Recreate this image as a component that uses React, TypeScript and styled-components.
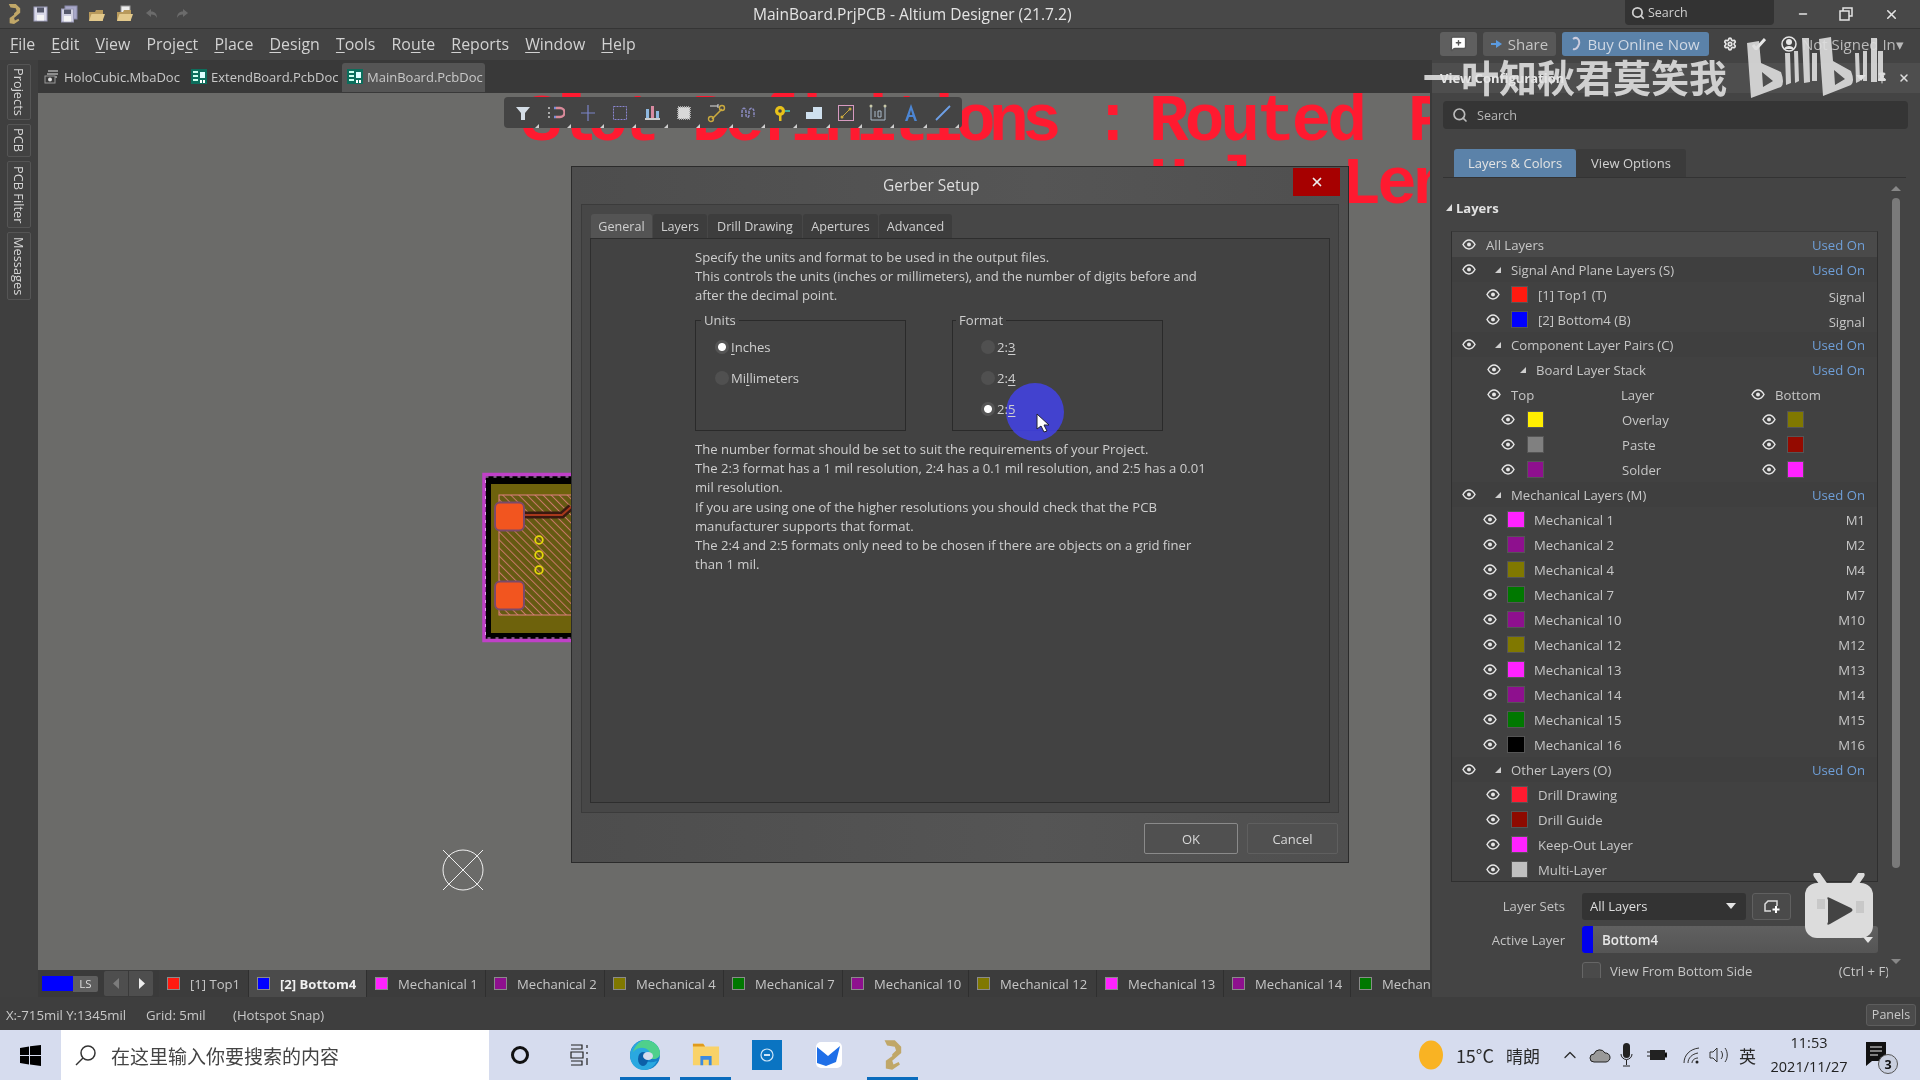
import React from "react";
import styled, { createGlobalStyle } from "styled-components";
import { Search, Settings, X, Minus, ChevronUp, Pin, MessageSquarePlus } from "lucide-react";

const Global = createGlobalStyle`
  html, body { margin: 0; padding: 0; background: #3e3e3e; overflow: hidden; }
  * { box-sizing: border-box; }
  u { text-underline-offset: 2px; text-decoration-thickness: 1px; }
`;

const Page = styled.div`
  position: relative; width: 1920px; height: 1080px; overflow: hidden;
  display: flex; flex-direction: column;
  font-family: "Open Sans", "Noto Sans CJK SC", sans-serif; font-size: 12.5px; color: #c9c9c9; background: #3e3e3e;
`;

/* ---------- title bar ---------- */
const TitleBar = styled.div`
  height: 29px; flex: none; display: flex; align-items: center; background: #484848; border-bottom: 1px solid #353535;
`;
const QuickIcons = styled.div`
  width: 753px; flex: none; display: flex; align-items: center; gap: 10px; padding-left: 7px;
`;
const QuickIcon = styled.svg` width: 18px; height: 18px; flex: none; `;
const AppTitle = styled.div` font-size: 15.55px; color: #e4e4e4; white-space: nowrap; `;
const TopRight = styled.div` margin-left: auto; width: 295px; height: 100%; display: flex; align-items: flex-start; `;
const TopSearch = styled.div`
  width: 149px; height: 25px; background: #333; border-radius: 0 0 4px 4px; display: flex; align-items: center;
  gap: 3px; padding-left: 6px; font-size: 12.5px; color: #cfcfcf;
`;
const WinButtons = styled.div`
  flex: 1; height: 100%; display: flex; align-items: center; justify-content: space-around; padding: 0 6px 0 8px; color: #e4e4e4;
`;

/* ---------- menu bar ---------- */
const MenuBar = styled.div`
  height: 31px; flex: none; display: flex; align-items: center; background: #434343; padding: 0 0 2px 10px; gap: 16.1px;
`;
const MenuItem = styled.div` font-size: 15.9px; color: #d2d2d2; white-space: nowrap; `;
const MenuRight = styled.div`
  margin-left: auto; width: 480px; padding-right: 6px; display: flex; align-items: center; height: 100%; font-size: 15px;
`;
const PillButton = styled.div<{ $bg: string; $w: number; $ml: number; $color?: string }>`
  width: ${p => p.$w}px; margin-left: ${p => p.$ml}px; height: 24px; border-radius: 3px; background: ${p => p.$bg};
  color: ${p => p.$color ?? "#c5c5c5"}; display: flex; align-items: center; justify-content: center; gap: 6px; flex: none; white-space: nowrap;
`;
const MenuGlyph = styled.div<{ $ml: number }>`
  margin-left: ${p => p.$ml}px; display: flex; align-items: center; flex: none; color: #e6e6e6;
`;
const SignedIn = styled.div` margin-left: 5px; color: #b9b9b9; white-space: nowrap; font-size: 15px; `;

/* ---------- workspace ---------- */
const Workspace = styled.div` height: 937px; flex: none; display: flex; `;
const SideStrip = styled.div`
  width: 38px; flex: none; background: #3f3f3f; padding: 4px 0 0 7px; display: flex; flex-direction: column; gap: 4px;
`;
const SideTab = styled.div<{ $h: number }>`
  width: 24px; height: ${p => p.$h}px; background: #424242; border: 1px solid #555; border-radius: 2px;
  writing-mode: vertical-rl; display: flex; align-items: center; justify-content: center; font-size: 12.8px; color: #d6d6d6; white-space: nowrap;
`;
const CenterCol = styled.div` width: 1392px; flex: none; display: flex; flex-direction: column; `;
const DocTabs = styled.div`
  height: 33px; flex: none; background: #393939; display: flex; align-items: flex-end; padding: 0 0 1px 6px;
`;
const DocTab = styled.div<{ $active?: boolean; $w: number }>`
  width: ${p => p.$w}px; height: 29px; display: flex; align-items: center; gap: 4px; white-space: nowrap; padding: 0 0 2px ${p => p.$active ? 5 : 0}px;
  font-size: 13px; color: #c9c9c9; background: ${p => p.$active ? "#555" : "transparent"};
  border-radius: 3px 3px 0 0;
`;
const Canvas = styled.div`
  position: relative; flex: 1; background: #6b6b69; overflow: hidden;
`;
const RedLine = styled.div<{ $left: number; $top: number; $ws: number; $ls: number }>`
  position: absolute; left: ${p => p.$left}px; top: ${p => p.$top}px; word-spacing: ${p => p.$ws}px; letter-spacing: ${p => p.$ls}px;
  font-family: "Liberation Mono", monospace; font-weight: 700; font-size: 66px; line-height: 66px; color: #ff1a30; white-space: pre;
`;
const FloatBar = styled.div`
  position: absolute; left: 466px; top: 4px; width: 458px; height: 31px; background: #444; border-radius: 4px;
  display: flex; align-items: center; padding-left: 9px; gap: 12.300px;
`;
const ToolSlot = styled.div`
  position: relative; width: 20px; height: 20px; flex: none;
  &::after { content: ""; position: absolute; right: -6px; bottom: -5px; border-left: 4px solid transparent; border-bottom: 4px solid #cfcfcf; }
`;
const BoardArt = styled.svg` position: absolute; left: 440px; top: 378px; `;
const Origin = styled.svg` position: absolute; left: 403px; top: 755px; `;

/* ---------- dialog ---------- */
const Dialog = styled.div`
  position: absolute; left: 533px; top: 73px; width: 778px; height: 697px; background: linear-gradient(90deg, #4d4d4d, #555 60%, #4f4f4f);
  border: 1px solid #2b2b2b; display: flex; flex-direction: column;
`;
const DialogHead = styled.div` height: 37px; flex: none; display: flex; align-items: center; padding: 0 0 2px 311px; `;
const DialogTitle = styled.div` font-size: 15.5px; color: #dedede; `;
const CloseBtn = styled.div`
  margin-left: auto; margin-right: 8px; margin-top: -6px; width: 47px; height: 28px; background: #a60000; color: #eee;
  display: flex; align-items: center; justify-content: center;
`;
const DialogBody = styled.div`
  margin: 0 9px; height: 609px; flex: none; background: #474747; border: 1px solid #3b3b3b; padding: 9px 8px 9px; display: flex; flex-direction: column;
`;
const TabRow = styled.div` height: 24px; flex: none; display: flex; gap: 1px; padding-left: 1px; `;
const DlgTab = styled.div<{ $w: number; $active?: boolean }>`
  width: ${p => p.$w}px; display: flex; align-items: center; justify-content: center; font-size: 12.6px;
  background: ${p => p.$active ? "#545454" : "#3d3d3d"}; color: #d0d0d0; border-radius: 3px 3px 0 0; white-space: nowrap;
`;
const Pane = styled.div`
  flex: 1; background: #424242; border: 1px solid #2e2e2e; padding: 9px 0 0 104px; font-size: 13.1px; line-height: 19px; color: #cfcfcf;
`;
const TextBlock = styled.div` width: 580px; white-space: pre-line; `;
const GroupRow = styled.div` display: flex; gap: 46px; margin-top: 6px; `;
const Group = styled.fieldset`
  width: 211px; height: 120px; margin: 0; padding: 0; border: 1px solid #2a2a2a; min-width: 0;
`;
const Legend = styled.legend<{ $ml: number }>` margin-left: ${p => p.$ml}px; padding: 0 3px; line-height: 18px; font-size: 13.1px; color: #cfcfcf; `;
const RadioList = styled.div<{ $pl: number }>` padding: 3px 0 0 ${p => p.$pl}px; `;
const RadioRow = styled.div` height: 31px; display: flex; align-items: center; gap: 2px; color: #cfcfcf; `;
const Radio = styled.div<{ $on?: boolean }>`
  width: 14px; height: 14px; border-radius: 50%; flex: none; margin-top: -2px;
  background: ${p => p.$on ? "radial-gradient(circle, #fff 0 3.5px, #555 4.5px)" : "#505050"};
`;
const Para = styled(TextBlock)` margin-top: 9px; line-height: 19.200px; `;
const DialogFoot = styled.div` flex: 1; display: flex; justify-content: flex-end; gap: 9px; padding: 10px 10px 0 0; `;
const DlgBtn = styled.div<{ $w: number; $primary?: boolean }>`
  width: ${p => p.$w}px; height: 31px; display: flex; align-items: center; justify-content: center; font-size: 13px; color: #d8d8d8;
  background: #505050; border: 1px solid ${p => p.$primary ? "#8a8a8a" : "#5f5f5f"}; border-radius: 2px;
`;
const Highlight = styled.div`
  position: absolute; left: 434px; top: 216px; width: 58px; height: 58px; border-radius: 50%; background: #3d3dcf; mix-blend-mode: lighten;
`;
const Pointer = styled.svg` position: absolute; left: 464px; top: 246px; `;

/* ---------- layer tab strip ---------- */
const LayerBar = styled.div` height: 27px; flex: none; background: #3a3a3a; display: flex; align-items: center; padding-left: 4px; overflow: hidden; `;
const ActiveChip = styled.div` width: 31px; height: 15px; background: #0000ff; flex: none; `;
const LsChip = styled.div` width: 25px; height: 16px; background: #5f5f5f; border-radius: 0 2px 2px 0; font-size: 11.5px; color: #ddd; display: flex; align-items: center; justify-content: center; flex: none; `;
const NavBox = styled.div` margin-left: 6px; width: 49px; height: 25px; background: #4e4e4e; border-radius: 2px; display: flex; flex: none; margin-right: 6px; `;
const NavBtn = styled.div<{ $dim?: boolean }>`
  flex: 1; display: flex; align-items: center; justify-content: center; color: ${p => p.$dim ? "#7c7c7c" : "#eee"};
  &:first-child { border-right: 1px solid #3a3a3a; }
`;
const LayerTab = styled.div<{ $w: number; $active?: boolean }>`
  width: ${p => p.$w}px; flex: none; height: 27px; display: flex; align-items: center; gap: 10px; padding-left: 8px; white-space: nowrap;
  background: ${p => p.$active ? "#4b4b4b" : "#3c3c3c"}; font-size: 13.1px; font-weight: ${p => p.$active ? 700 : 400}; color: ${p => p.$active ? "#efefef" : "#c6c6c6"};
  border-right: 1px solid #2f2f2f; overflow: hidden;
`;
const TabSwatch = styled.div<{ $c: string }>` width: 13px; height: 13px; flex: none; background: ${p => p.$c}; border: 1px solid #8a8a8a; `;

/* ---------- right panel ---------- */
const RightPanel = styled.div` width: 490px; flex: none; background: #444; display: flex; flex-direction: column; border-left: 2px solid #3a3a3a; padding-top: 3px; `;
const PanelHead = styled.div`
  height: 30px; flex: none; margin: 0; background: #4e4e4e; display: flex; align-items: center; padding: 0 10px 0 8px;
  font-weight: 700; font-size: 13px; color: #e8e8e8;
`;
const PanelHeadIcons = styled.div` margin-left: auto; display: flex; align-items: center; gap: 10px; color: #ddd; `;
const PanelSearch = styled.div`
  margin: 8px 12px 0 11px; height: 28px; flex: none; background: #353535; border-radius: 4px; display: flex; align-items: center; gap: 9px; padding-left: 9px;
  color: #b8b8b8; font-size: 12.6px;
`;
const PanelTabs = styled.div` margin: 20px 14px 0 11px; height: 29px; flex: none; display: flex; padding-left: 11px; border-bottom: 1px solid #333; `;
const PanelTab = styled.div<{ $w: number; $active?: boolean }>`
  width: ${p => p.$w}px; display: flex; align-items: center; justify-content: center; border-radius: 3px 3px 0 0; font-size: 13px;
  background: ${p => p.$active ? "#5b82a9" : "#3b3b3b"}; color: ${p => p.$active ? "#e4e4e4" : "#d2d2d2"};
`;
const PanelBody = styled.div` flex: 1; display: flex; min-height: 0; `;
const PanelMain = styled.div` width: 456px; flex: none; padding-left: 19px; display: flex; flex-direction: column; `;
const SectionHead = styled.div`
  height: 53px; flex: none; display: flex; align-items: center; gap: 4px; font-weight: 700; font-size: 13px; color: #e2e2e2; margin-left: -5px; padding-top: 6px;
`;
const LayerList = styled.div` width: 427px; height: 651px; flex: none; background: #414141; border: 1px solid #2f2f2f; border-top-color: #3a3a3a; `;
const LayerRow = styled.div<{ $indent: number; $tone?: string }>`
  height: 25px; display: flex; align-items: center; padding: 0 12px 0 ${p => p.$indent}px; background: ${p => p.$tone ?? "transparent"}; color: #c6c6c6; font-size: 13.15px; white-space: nowrap;
`;
const Caret = styled.div`
  width: 0; height: 0; margin: 0 10px 0 19px; flex: none; border-left: 6px solid transparent; border-bottom: 6px solid #cfcfcf;
`;
const Swatch = styled.div<{ $c: string; $ml: number; $mr: number; $w: number }>`
  width: ${p => p.$w}px; height: 17px; flex: none; margin: 0 ${p => p.$mr}px 0 ${p => p.$ml}px; background: ${p => p.$c}; border: 1px solid #555;
`;
const LeadText = styled.div<{ $ml?: number; $w?: number }>`
  margin-left: ${p => p.$ml ?? 0}px; ${p => p.$w ? `width: ${p.$w}px; flex: none;` : ""}
`;
const EndText = styled.div<{ $link?: boolean; $low?: boolean }>`
  margin-left: auto; margin-top: ${p => p.$low ? 4 : 0}px; color: ${p => p.$link ? "#6f9fd8" : "#c6c6c6"};
`;
const Controls = styled.div` display: flex; flex-direction: column; flex: none; overflow: hidden; height: 96px; `;
const ControlRow = styled.div<{ $h: number; $mt: number }>` height: ${p => p.$h}px; margin-top: ${p => p.$mt}px; flex: none; display: flex; align-items: center; `;
const ControlLabel = styled.div` width: 115px; padding-right: 1px; text-align: right; flex: none; font-size: 13.1px; color: #c4c4c4; `;
const SelectBox = styled.div`
  margin-left: 16px; width: 164px; height: 27px; background: #333; border-radius: 3px; color: #dedede; font-size: 13px; display: flex; align-items: center; justify-content: space-between; padding: 0 10px 0 8px;
`;
const DownTri = styled.div` width: 0; height: 0; border-left: 5px solid transparent; border-right: 5px solid transparent; border-top: 6px solid #e4e4e4; flex: none; `;
const SquareBtn = styled.div` margin-left: 6px; width: 39px; height: 27px; background: #4a4a4a; border: 1px solid #606060; border-radius: 3px; display: flex; align-items: center; justify-content: center; color: #ddd; `;
const ActiveBox = styled.div`
  margin-left: 16px; width: 296px; height: 27px; background: linear-gradient(#606060, #555); border-radius: 3px; display: flex; align-items: center; font-weight: 600; font-size: 13.4px; color: #e6e6e6; overflow: hidden; padding-right: 5px; justify-content: space-between;
`;
const ActiveLabel = styled.div` display: flex; align-items: center; height: 100%; `;
const ActiveBlue = styled.div` width: 11px; height: 100%; background: #0000ee; margin-right: 9px; flex: none; `;
const CheckBox = styled.div` margin-left: 16px; width: 19px; height: 24px; margin-top: 6px; background: #4a4a4a; border: 1px solid #666; border-radius: 3px; flex: none; `;
const CheckText = styled.div` margin-left: 9px; font-size: 13.1px; color: #c6c6c6; white-space: nowrap; `;
const Shortcut = styled.div` margin-left: auto; margin-right: -1px; font-size: 13.1px; color: #c6c6c6; white-space: nowrap; `;
const ScrollCol = styled.div`
  width: 16px; flex: none; display: flex; flex-direction: column; align-items: center; padding-top: 8px;
`;
const UpTri = styled.div` width: 0; height: 0; border-left: 5px solid transparent; border-right: 5px solid transparent; border-bottom: 5px solid #888; `;
const DownTriDim = styled.div` width: 0; height: 0; border-left: 5px solid transparent; border-right: 5px solid transparent; border-top: 5px solid #888; margin-top: 91px; `;
const Thumb = styled.div` margin-top: 7px; width: 8px; height: 670px; background: #7a7a7a; border-radius: 4px; flex: none; `;

/* ---------- status + taskbar ---------- */
const StatusBar = styled.div`
  height: 33px; flex: none; background: #3e3e3e; display: flex; align-items: center; padding: 2px 0 0 6px; font-size: 13.2px; color: #c8c8c8; white-space: nowrap;
`;
const StatusItem = styled.div<{ $w: number }>` width: ${p => p.$w}px; flex: none; `;
const PanelsBtn = styled.div`
  margin-left: auto; margin-right: 4px; width: 50px; height: 22px; background: #4b4b4b; border: 1px solid #5d5d5d; border-radius: 3px; display: flex; align-items: center; justify-content: center; font-size: 12.5px;
`;
const Taskbar = styled.div`
  height: 50px; flex: none; background: #d6dcee; display: flex; align-items: center; color: #222;
`;
const WinSlot = styled.div` width: 61px; flex: none; display: flex; justify-content: center; padding-right: 1px; `;
const TaskSearch = styled.div`
  width: 428px; height: 50px; flex: none; background: #fff; display: flex; align-items: center; gap: 14px; padding-left: 14px;
  font-size: 19px; color: #444; font-family: "Noto Sans CJK SC", sans-serif;
`;
const TaskIcon = styled.div<{ $w: number; $ml?: number; $active?: boolean }>`
  position: relative; width: ${p => p.$w}px; margin-left: ${p => p.$ml ?? 0}px; height: 50px; flex: none; display: flex; align-items: center; justify-content: center;
  ${p => p.$active ? `&::after { content: ""; position: absolute; left: 0; right: 0; bottom: 0; height: 3px; background: #0a6cbd; }` : ""}
`;
const Tray = styled.div` margin-left: auto; display: flex; align-items: center; height: 100%; padding-right: 24px; `;
const TrayItem = styled.div<{ $ml: number; $size?: number }>`
  margin-left: ${p => p.$ml}px; display: flex; align-items: center; flex: none; font-size: ${p => p.$size ?? 14}px; color: #2a2a2a; white-space: nowrap;
  font-family: "Noto Sans CJK SC", "Open Sans", sans-serif;
`;
const Clock = styled.div`
  margin-left: 8px; width: 90px; text-align: center; font-size: 14.5px; line-height: 24px; color: #222;
`;
const Notify = styled.div` position: relative; margin-left: 12px; width: 30px; height: 34px; flex: none; `;
const NotifyBubble = styled.svg` position: absolute; left: 0; top: 4px; `;
const NotifyBadge = styled.div`
  position: absolute; right: -2px; bottom: -2px; width: 20px; height: 20px; border-radius: 50%; border: 1px solid #555; background: #c9cfdf;
  display: flex; align-items: center; justify-content: center; font-size: 12.5px; font-weight: 700; color: #111;
`;

/* ---------- watermark ---------- */
const Watermark = styled.div`
  position: absolute; left: 1423px; top: 52px; font-family: "Noto Sans CJK SC", sans-serif; font-weight: 700; font-size: 38px; line-height: 48px; color: rgba(226,226,226,.88); white-space: nowrap;
`;
const BiliLogo = styled.svg` position: absolute; left: 1747px; top: 35px; `;
const TvLogo = styled.svg` position: absolute; left: 1804px; top: 873px; `;

/* ---------- icons ---------- */
const Eye = () => (
  <svg width="14" height="11" viewBox="0 0 14 11" style={{ flex: "none" }}>
    <path d="M1 5.5C3 2 5 1 7 1s4 1 6 4.5C11 9 9 10 7 10S3 9 1 5.5Z" fill="none" stroke="#e6e6e6" strokeWidth="1.5" />
    <circle cx="7" cy="5.5" r="2" fill="#e6e6e6" />
  </svg>
);
const AltiumMark = ({ h }: { h: number }) => (
  <svg width={h * 0.68} height={h} viewBox="0 0 17 25">
    <path d="M2 1 10 1 15 6 15 11 8 17 8 12 11 9 10 6 4 5ZM3 23 3 17 10 12 8 17 9 20 13 18 14 20 8 24Z" fill="#c0a768" />
  </svg>
);
const FloppyIcon = () => (
  <QuickIcon viewBox="0 0 18 18">
    <rect x="2" y="2" width="13" height="14" fill="#d8d8e8" stroke="#9a9ab8" />
    <rect x="5" y="2.5" width="7" height="5" fill="#55586a" />
    <rect x="5" y="10" width="7" height="5.5" fill="#f4f4f4" />
  </QuickIcon>
);
const FloppyAll = () => (
  <QuickIcon viewBox="0 0 18 18">
    <rect x="5" y="1" width="12" height="13" fill="#a8a8c8" stroke="#8888a8" />
    <rect x="1.5" y="4" width="12" height="13" fill="#d0d0e0" stroke="#9a9ab8" />
    <rect x="4" y="4.5" width="7" height="4.5" fill="#55586a" />
    <rect x="4" y="11" width="7" height="5.5" fill="#f4f4f4" />
  </QuickIcon>
);
const FolderIcon = ({ doc }: { doc?: boolean }) => (
  <QuickIcon viewBox="0 0 18 18">
    {doc && <rect x="5" y="1" width="9" height="10" fill="#eee" stroke="#999" />}
    <path d="M1 7h6l1-2h7v11H1Z" fill="#b89a5c" />
    <path d="M1 16 3.5 9H17l-2.5 7Z" fill="#e2c98c" />
  </QuickIcon>
);
const UndoIcon = ({ flip }: { flip?: boolean }) => (
  <QuickIcon viewBox="0 0 18 18" style={flip ? { transform: "scaleX(-1)" } : undefined}>
    <path d="M7 4 2 8l5 4V9.5c3 0 5 1 6 3.5 0-4-2-6.500-6-6.500Z" fill="#6b6b6b" />
  </QuickIcon>
);
const PcbDocIcon = () => (
  <svg width="16" height="15" viewBox="0 0 16 15" style={{ flex: "none" }}>
    <rect width="16" height="15" fill="#0c6e5c" />
    <rect x="2" y="2" width="5" height="2" fill="#cfe" /><rect x="2" y="6" width="5" height="2" fill="#cfe" />
    <rect x="2" y="10" width="5" height="2" fill="#cfe" /><rect x="9" y="3" width="5" height="6" fill="#dff" />
    <rect x="9" y="11" width="2" height="3" fill="#fff" /><rect x="12" y="11" width="2" height="3" fill="#fff" />
  </svg>
);
const MbaIcon = () => (
  <svg width="16" height="16" viewBox="0 0 16 16" style={{ flex: "none" }}>
    <path d="M4 2h10M3 5h11M2 8h11" stroke="#aaa" strokeWidth="1.4" />
    <rect x="1" y="7" width="10" height="7" fill="#3a3a3a" stroke="#999" />
    <circle cx="6" cy="10.500" r="2" fill="#ddd" />
  </svg>
);

const tools: React.ReactNode[] = [
  <path key="0" d="M3 4h14l-5 6v7h-4v-7Z" fill="#d4dde6" />,
  <g key="1"><path d="M11 5h4a4 4 0 0 1 0 9h-4" fill="none" stroke="#d98a9a" strokeWidth="2.4" /><path d="M11 5H8M11 14H8" stroke="#7c8fd8" strokeWidth="2.4" strokeDasharray="2 1" /><circle cx="4" cy="5" r="1" fill="#ccc" /><circle cx="4" cy="10" r="1" fill="#ccc" /><circle cx="4" cy="14" r="1" fill="#ccc" /></g>,
  <path key="2" d="M10 2v16M3 10h14" stroke="#7b84c8" strokeWidth="1.200" />,
  <rect key="3" x="3.500" y="3.500" width="13" height="13" fill="none" stroke="#8a86d0" strokeDasharray="2 1" />,
  <g key="4"><rect x="4" y="6" width="3" height="9" fill="#8fb8e0" /><rect x="9" y="3" width="3" height="12" fill="#d88aa0" /><rect x="14" y="8" width="3" height="7" fill="#8fb8e0" /><rect x="3" y="15" width="15" height="2" fill="#ccc" /></g>,
  <g key="5"><rect x="4" y="4" width="12" height="12" fill="#d8d8d8" stroke="#aaa" strokeDasharray="1 1" strokeWidth="2" /></g>,
  <g key="6"><path d="M5 16 15 6" stroke="#c9a93f" strokeWidth="1.600" /><circle cx="15" cy="5" r="2.500" fill="none" stroke="#c9a93f" strokeWidth="1.400" /><circle cx="4" cy="16" r="2.500" fill="none" stroke="#c9a93f" strokeWidth="1.400" /><path d="M3 3h8M11 1v4" stroke="#ddd" /></g>,
  <path key="7" d="M3 14V9c0-5 4-5 4 0v3c0 3 3 3 3 0V9c0-5 5-5 5 0v5" fill="none" stroke="#8a8ac0" strokeWidth="1.500" strokeDasharray="3 1" />,
  <g key="8"><circle cx="9" cy="8" r="5" fill="#e8c21a" /><circle cx="9" cy="8" r="1.800" fill="#444" /><rect x="8" y="12" width="2.500" height="6" fill="#e8c21a" /><path d="M14 8h5" stroke="#4a9" strokeWidth="2" /></g>,
  <path key="9" d="M2 16V9h7V4h9v12Z" fill="#cfe0ee" />,
  <g key="10"><rect x="2.500" y="2.500" width="15" height="15" fill="none" stroke="#d79ac0" /><path d="M6 14 14 6" stroke="#c9a93f" /><circle cx="14" cy="6" r="1.500" fill="#c9a93f" /><circle cx="6" cy="14" r="1.500" fill="#c9a93f" /></g>,
  <g key="11"><path d="M3 3v14h14V3" fill="none" stroke="#a9b9c9" /><circle cx="3" cy="3" r="1.500" fill="#c9c9a9" /><circle cx="17" cy="3" r="1.500" fill="#c9c9a9" /><path d="M7 8v6M10 8v6h3V8h-3" fill="none" stroke="#a9b9c9" /></g>,
  <path key="12" d="M10 1 16 18h-2.500L12 14H8l-1.500 4H4Zm0 6L8.600 12h2.800Z" fill="#4c86d4" />,
  <path key="13" d="M3 17 17 3" stroke="#6ea0e8" strokeWidth="1.800" />,
];

type Row =
  | { k: "all" | "head"; label: string; indent?: number }
  | { k: "sub"; label: string }
  | { k: "cols" }
  | { k: "pair"; label: string; a: string; b: string }
  | { k: "item"; label: string; c: string; end?: string }
  | { k: "mech"; label: string; c: string; end: string };

const M = "#ff22ff", P = "#8e108e", O = "#807800", G = "#007800";
const rows: Row[] = [
  { k: "all", label: "All Layers" },
  { k: "head", label: "Signal And Plane Layers (S)" },
  { k: "item", label: "[1] Top1 (T)", c: "#ff1a10", end: "Signal" },
  { k: "item", label: "[2] Bottom4 (B)", c: "#0000ff", end: "Signal" },
  { k: "head", label: "Component Layer Pairs (C)" },
  { k: "sub", label: "Board Layer Stack" },
  { k: "cols" },
  { k: "pair", label: "Overlay", a: "#ffee00", b: "#807800" },
  { k: "pair", label: "Paste", a: "#808080", b: "#940a00" },
  { k: "pair", label: "Solder", a: P, b: M },
  { k: "head", label: "Mechanical Layers (M)" },
  { k: "mech", label: "Mechanical 1", c: M, end: "M1" },
  { k: "mech", label: "Mechanical 2", c: P, end: "M2" },
  { k: "mech", label: "Mechanical 4", c: O, end: "M4" },
  { k: "mech", label: "Mechanical 7", c: G, end: "M7" },
  { k: "mech", label: "Mechanical 10", c: P, end: "M10" },
  { k: "mech", label: "Mechanical 12", c: O, end: "M12" },
  { k: "mech", label: "Mechanical 13", c: M, end: "M13" },
  { k: "mech", label: "Mechanical 14", c: P, end: "M14" },
  { k: "mech", label: "Mechanical 15", c: G, end: "M15" },
  { k: "mech", label: "Mechanical 16", c: "#000", end: "M16" },
  { k: "head", label: "Other Layers (O)" },
  { k: "item", label: "Drill Drawing", c: "#ff1a30" },
  { k: "item", label: "Drill Guide", c: "#8e0a00" },
  { k: "item", label: "Keep-Out Layer", c: M },
  { k: "item", label: "Multi-Layer", c: "#c0c0c0" },
];

const renderRow = (r: Row, i: number) => {
  switch (r.k) {
    case "all":
      return <LayerRow key={i} $indent={10} $tone="#4a4a4a"><Eye /><LeadText $ml={10}>{r.label}</LeadText><EndText $link>Used On</EndText></LayerRow>;
    case "head":
      return <LayerRow key={i} $indent={10} $tone="#3f3f3f"><Eye /><Caret />{r.label}<EndText $link>Used On</EndText></LayerRow>;
    case "sub":
      return <LayerRow key={i} $indent={35}><Eye /><Caret />{r.label}<EndText $link>Used On</EndText></LayerRow>;
    case "cols":
      return <LayerRow key={i} $indent={35}><Eye /><LeadText $ml={10} $w={110}>Top</LeadText><LeadText $w={130}>Layer</LeadText><Eye /><LeadText $ml={10}>Bottom</LeadText></LayerRow>;
    case "pair":
      return <LayerRow key={i} $indent={49}><Eye /><Swatch $c={r.a} $ml={12} $mr={78} $w={17} /><LeadText $w={140}>{r.label}</LeadText><Eye /><Swatch $c={r.b} $ml={11} $mr={0} $w={17} /></LayerRow>;
    case "item":
      return <LayerRow key={i} $indent={34}><Eye /><Swatch $c={r.c} $ml={11} $mr={10} $w={17} />{r.label}{r.end && <EndText $low>{r.end}</EndText>}</LayerRow>;
    case "mech":
      return <LayerRow key={i} $indent={31}><Eye /><Swatch $c={r.c} $ml={10} $mr={9} $w={18} />{r.label}<EndText>{r.end}</EndText></LayerRow>;
  }
};

const layerTabs = [
  { l: "[1] Top1", c: "#ff1a10", w: 90 },
  { l: "[2] Bottom4", c: "#0000ff", w: 118, active: true },
  { l: "Mechanical 1", c: M, w: 119 },
  { l: "Mechanical 2", c: P, w: 119 },
  { l: "Mechanical 4", c: O, w: 119 },
  { l: "Mechanical 7", c: G, w: 119 },
  { l: "Mechanical 10", c: P, w: 126 },
  { l: "Mechanical 12", c: O, w: 128 },
  { l: "Mechanical 13", c: M, w: 127 },
  { l: "Mechanical 14", c: P, w: 127 },
  { l: "Mechanical 15", c: G, w: 127 },
];

const App: React.FC = () => (
  <Page>
    <Global />
    <TitleBar>
      <QuickIcons>
        <AltiumMark h={22} />
        <FloppyIcon /><FloppyAll /><FolderIcon /><FolderIcon doc /><UndoIcon /><UndoIcon flip />
      </QuickIcons>
      <AppTitle>MainBoard.PrjPCB - Altium Designer (21.7.2)</AppTitle>
      <TopRight>
        <TopSearch><Search size={14} strokeWidth={3} />Search</TopSearch>
        <WinButtons><Minus size={12} strokeWidth={3} /><svg width="14" height="14" viewBox="0 0 14 14"><path d="M4 4V1h9v8h-3M1 4h9v9H1Z" fill="none" stroke="#e4e4e4" strokeWidth="1.500" /></svg><X size={15} strokeWidth={2.500} /></WinButtons>
      </TopRight>
    </TitleBar>

    <MenuBar>
      <MenuItem><u>F</u>ile</MenuItem><MenuItem><u>E</u>dit</MenuItem><MenuItem><u>V</u>iew</MenuItem>
      <MenuItem>Proje<u>c</u>t</MenuItem><MenuItem><u>P</u>lace</MenuItem><MenuItem><u>D</u>esign</MenuItem>
      <MenuItem><u>T</u>ools</MenuItem><MenuItem>Ro<u>u</u>te</MenuItem><MenuItem><u>R</u>eports</MenuItem>
      <MenuItem><u>W</u>indow</MenuItem><MenuItem><u>H</u>elp</MenuItem>
      <MenuRight>
        <PillButton $bg="#5f5f5f" $w={37} $ml={0} $color="#fff"><MessageSquarePlus size={17} fill="#fff" stroke="#555" /></PillButton>
        <PillButton $bg="#585858" $w={73} $ml={6}><svg width="11" height="10" viewBox="0 0 11 10"><path d="M0 6V4h5V1l6 4-6 4V6Z" fill="#5b9be0" /></svg>Share</PillButton>
        <PillButton $bg="#5b82a9" $w={147} $ml={6} $color="#cfd8e4"><svg width="10" height="16" viewBox="0 0 10 16"><path d="M2 3c4-3 7 1 6 5-1 3-3 6-6 5" fill="none" stroke="#ccd" strokeWidth="2" /></svg>Buy Online Now</PillButton>
        <MenuGlyph $ml={14}><Settings size={14} strokeWidth={3} /></MenuGlyph>
        <MenuGlyph $ml={15}><svg width="14" height="12" viewBox="0 0 14 12"><path d="M1 7 4 11 13 1" fill="none" stroke="#e6e6e6" strokeWidth="3" /></svg></MenuGlyph>
        <MenuGlyph $ml={15}><svg width="16" height="16" viewBox="0 0 16 16"><circle cx="8" cy="8" r="7" fill="none" stroke="#e6e6e6" strokeWidth="1.500" /><circle cx="8" cy="6" r="3" fill="#e6e6e6" /><path d="M3 13c1-4 9-4 10 0" fill="#e6e6e6" /></svg></MenuGlyph>
        <SignedIn>Not Signed In▾</SignedIn>
      </MenuRight>
    </MenuBar>

    <Workspace>
      <SideStrip>
        <SideTab $h={56}>Projects</SideTab>
        <SideTab $h={33}>PCB</SideTab>
        <SideTab $h={67}>PCB Filter</SideTab>
        <SideTab $h={68}>Messages</SideTab>
      </SideStrip>

      <CenterCol>
        <DocTabs>
          <DocTab $w={147}><MbaIcon />HoloCubic.MbaDoc</DocTab>
          <DocTab $w={151}><PcbDocIcon />ExtendBoard.PcbDoc</DocTab>
          <DocTab $w={143} $active><PcbDocIcon />MainBoard.PcbDoc</DocTab>
        </DocTabs>
        <Canvas>
          <RedLine $left={484} $top={-3} $ws={5} $ls={-6.6}>Slot Definitions :</RedLine>
          <RedLine $left={1111} $top={-3} $ws={9} $ls={-3.9}>Routed Path Length</RedLine>
          <RedLine $left={1111} $top={60} $ws={14} $ls={-3.9}>Hole Length</RedLine>
          <FloatBar>
            {tools.map((t, i) => (
              <ToolSlot key={i}><svg width="20" height="20" viewBox="0 0 20 20">{t}</svg></ToolSlot>
            ))}
          </FloatBar>
          <BoardArt width="100" height="175" viewBox="0 0 100 175">
            <defs>
              <pattern id="hatch" width="5.7" height="8" patternUnits="userSpaceOnUse" patternTransform="rotate(-45)">
                <rect width="5.7" height="8" fill="#655a12" />
                <rect width="1" height="8" fill="#c9786a" />
              </pattern>
            </defs>
            <rect x="6" y="3.500" width="110" height="166" fill="#000" stroke="#c040c8" strokeWidth="3.500" />
            <rect x="7.500" y="6" width="110" height="161" fill="none" stroke="#e0a0e8" strokeDasharray="3 5" />
            <rect x="13" y="13" width="100" height="149" fill="#6e620c" />
            <rect x="21" y="24" width="100" height="120" fill="url(#hatch)" stroke="#e08080" />
            <path d="M46 44H84L93 36" fill="none" stroke="#3a1a10" strokeWidth="7" />
            <path d="M46 44H84L93 36" fill="none" stroke="#a8381c" strokeWidth="2" />
            <rect x="17" y="31.500" width="29" height="28" rx="5" fill="#f2551f" stroke="#7a4a6a" strokeWidth="2" />
            <rect x="17" y="110.500" width="29" height="28" rx="5" fill="#f2551f" stroke="#7a4a6a" strokeWidth="2" />
            {[69, 84, 99].map(y => <circle key={y} cx="61" cy={y} r="3.800" fill="none" stroke="#e6d80a" strokeWidth="1.800" />)}
          </BoardArt>
          <Origin width="44" height="44" viewBox="0 0 44 44">
            <circle cx="22" cy="22" r="20" fill="none" stroke="#f0f0f0" />
            <path d="M2 2 42 42M42 2 2 42" stroke="#f0f0f0" />
          </Origin>

          <Dialog>
            <DialogHead>
              <DialogTitle>Gerber Setup</DialogTitle>
              <CloseBtn><X size={14} strokeWidth={3} /></CloseBtn>
            </DialogHead>
            <DialogBody>
              <TabRow>
                <DlgTab $w={61} $active>General</DlgTab>
                <DlgTab $w={54}>Layers</DlgTab>
                <DlgTab $w={94}>Drill Drawing</DlgTab>
                <DlgTab $w={75}>Apertures</DlgTab>
                <DlgTab $w={73}>Advanced</DlgTab>
              </TabRow>
              <Pane>
                <TextBlock>{"Specify the units and format to be used in the output files.\nThis controls the units (inches or millimeters), and the number of digits before and\nafter the decimal point."}</TextBlock>
                <GroupRow>
                  <Group>
                    <Legend $ml={5}>Units</Legend>
                    <RadioList $pl={19}>
                      <RadioRow><Radio $on /><span><u>I</u>nches</span></RadioRow>
                      <RadioRow><Radio /><span>Mi<u>l</u>limeters</span></RadioRow>
                    </RadioList>
                  </Group>
                  <Group>
                    <Legend $ml={3}>Format</Legend>
                    <RadioList $pl={28}>
                      <RadioRow><Radio /><span>2:<u>3</u></span></RadioRow>
                      <RadioRow><Radio /><span>2:<u>4</u></span></RadioRow>
                      <RadioRow><Radio $on /><span>2:<u>5</u></span></RadioRow>
                    </RadioList>
                  </Group>
                </GroupRow>
                <Para>{"The number format should be set to suit the requirements of your Project.\nThe 2:3 format has a 1 mil resolution, 2:4 has a 0.1 mil resolution, and 2:5 has a 0.01\nmil resolution.\nIf you are using one of the higher resolutions you should check that the PCB\nmanufacturer supports that format.\nThe 2:4 and 2:5 formats only need to be chosen if there are objects on a grid finer\nthan 1 mil."}</Para>
              </Pane>
            </DialogBody>
            <DialogFoot>
              <DlgBtn $w={94} $primary>OK</DlgBtn>
              <DlgBtn $w={91}>Cancel</DlgBtn>
            </DialogFoot>
            <Highlight />
            <Pointer width="14" height="20" viewBox="0 0 14 20"><path d="M1 1v15l4-3 3 6 3-1-3-6h5Z" fill="#fff" stroke="#223" /></Pointer>
          </Dialog>
        </Canvas>
        <LayerBar>
          <ActiveChip /><LsChip>LS</LsChip>
          <NavBox>
            <NavBtn $dim><svg width="7" height="11" viewBox="0 0 7 11"><path d="M6 0v11L0 5.500Z" fill="currentColor" /></svg></NavBtn>
            <NavBtn><svg width="7" height="11" viewBox="0 0 7 11"><path d="M1 0v11l6-5.500Z" fill="currentColor" /></svg></NavBtn>
          </NavBox>
          {layerTabs.map(t => (
            <LayerTab key={t.l} $w={t.w} $active={t.active}><TabSwatch $c={t.c} />{t.l}</LayerTab>
          ))}
        </LayerBar>
      </CenterCol>

      <RightPanel>
        <PanelHead>
          View Configuration
          <PanelHeadIcons><DownTri /><Pin size={12} fill="#ddd" /><X size={12} strokeWidth={3} /></PanelHeadIcons>
        </PanelHead>
        <PanelSearch><Search size={16} strokeWidth={2.500} color="#bbb" />Search</PanelSearch>
        <PanelTabs>
          <PanelTab $w={122} $active>Layers &amp; Colors</PanelTab>
          <PanelTab $w={110}>View Options</PanelTab>
        </PanelTabs>
        <PanelBody>
          <PanelMain>
            <SectionHead><svg width="6" height="7" viewBox="0 0 6 7"><path d="M6 0v7H0Z" fill="#ddd" /></svg>Layers</SectionHead>
            <LayerList>{rows.map(renderRow)}</LayerList>
            <Controls>
              <ControlRow $h={40} $mt={4}>
                <ControlLabel>Layer Sets</ControlLabel>
                <SelectBox>All Layers<DownTri /></SelectBox>
                <SquareBtn><svg width="18" height="16" viewBox="0 0 18 16"><path d="M8 13H2V6l3-3h9v5" fill="none" stroke="#ddd" strokeWidth="1.500" /><path d="M13 8v7M9.500 11.500h7" stroke="#fff" strokeWidth="2" /></svg></SquareBtn>
              </ControlRow>
              <ControlRow $h={27} $mt={0}>
                <ControlLabel>Active Layer</ControlLabel>
                <ActiveBox><ActiveLabel><ActiveBlue />Bottom4</ActiveLabel><DownTri /></ActiveBox>
              </ControlRow>
              <ControlRow $h={26} $mt={5}>
                <ControlLabel />
                <CheckBox />
                <CheckText>View From Bottom Side</CheckText>
                <Shortcut>(Ctrl + F)</Shortcut>
              </ControlRow>
            </Controls>
          </PanelMain>
          <ScrollCol>
            <UpTri /><Thumb /><DownTriDim />
          </ScrollCol>
        </PanelBody>
      </RightPanel>
    </Workspace>

    <StatusBar>
      <StatusItem $w={140}>X:-715mil Y:1345mil</StatusItem>
      <StatusItem $w={87}>Grid: 5mil</StatusItem>
      <StatusItem $w={100}>(Hotspot Snap)</StatusItem>
      <PanelsBtn>Panels</PanelsBtn>
    </StatusBar>

    <Taskbar>
      <WinSlot>
        <svg width="21" height="21" viewBox="0 0 21 21"><path d="M0 3 9 1.500V10H0ZM10 1.300 21 0V10H10ZM0 11h9v8.500L0 18ZM10 11h11v10l-11-1.500Z" fill="#000" /></svg>
      </WinSlot>
      <TaskSearch>
        <svg width="22" height="22" viewBox="0 0 22 22"><circle cx="13" cy="9" r="7" fill="none" stroke="#333" strokeWidth="1.500" /><path d="M8 14 1 21" stroke="#333" strokeWidth="1.500" /></svg>
        在这里输入你要搜索的内容
      </TaskSearch>
      <TaskIcon $w={62}><svg width="20" height="20" viewBox="0 0 20 20"><circle cx="10" cy="10" r="7.500" fill="none" stroke="#111" strokeWidth="3" /></svg></TaskIcon>
      <TaskIcon $w={58}><svg width="22" height="22" viewBox="0 0 22 22"><path d="M2 1h11v4H2M2 17h11v4H2M2 8h12v6H2ZM18 1v3M18 8v2M18 14v7" fill="none" stroke="#222" strokeWidth="1.200" /></svg></TaskIcon>
      <TaskIcon $w={50} $ml={11} $active>
        <svg width="32" height="32" viewBox="0 0 32 32">
          <circle cx="16" cy="16" r="15" fill="#1580c8" />
          <path d="M1 16C2 6 10 1 16 1c9 0 15 7 15 13 0 4-3 6-7 6h-9c2 4 8 4 13 2-3 6-8 9-13 9C6 31 1 24 1 16Z" fill="#2aa8e0" />
          <path d="M31 14c0 4-3 6-7 6h-4c2-2 2-5 0-8-4-5-12-4-16 1C7 5 12 1 16 1c9 0 15 7 15 13Z" fill="#4fd08c" />
          <ellipse cx="14" cy="20" rx="5" ry="7" fill="#0c5fa8" />
          <ellipse cx="19" cy="17" rx="5" ry="4" fill="#d6dcee" />
        </svg>
      </TaskIcon>
      <TaskIcon $w={51} $ml={10} $active>
        <svg width="28" height="28" viewBox="0 0 30 30">
          <path d="M1 3h11l2 3h15v20H1Z" fill="#f9d268" /><path d="M1 3h11l2 3H1Z" fill="#e09a1c" />
          <path d="M9 26V16h12v10h-3v-6h-6v6Z" fill="#3c8ae0" />
        </svg>
      </TaskIcon>
      <TaskIcon $w={72}>
        <svg width="30" height="30" viewBox="0 0 30 30"><rect width="30" height="30" fill="#0a74c2" /><circle cx="15" cy="15" r="6" fill="none" stroke="#cfe6f8" strokeWidth="1.200" /><path d="M12 15h6" stroke="#cfe6f8" strokeWidth="2" /></svg>
      </TaskIcon>
      <TaskIcon $w={52}>
        <svg width="26" height="26" viewBox="0 0 26 26"><rect width="26" height="26" rx="5" fill="#fff" /><path d="M1 5 12 14 24 4 20 20 10 24 1 21Z" fill="#1f6fe8" /></svg>
      </TaskIcon>
      <TaskIcon $w={51} $ml={12} $active><AltiumMark h={32} /></TaskIcon>

      <Tray>
        <TrayItem $ml={0}><svg width="24" height="30" viewBox="0 0 24 30"><ellipse cx="12" cy="15" rx="12" ry="14.500" fill="#f9b323" /></svg></TrayItem>
        <TrayItem $ml={13} $size={18}>15°C</TrayItem>
        <TrayItem $ml={12} $size={17}>晴朗</TrayItem>
        <TrayItem $ml={20}><ChevronUp size={20} strokeWidth={1.500} /></TrayItem>
        <TrayItem $ml={9}><svg width="22" height="16" viewBox="0 0 22 16"><path d="M5 15a4 4 0 0 1 0-8 6 6 0 0 1 11-1 4.500 4.500 0 0 1 1 9Z" fill="#999" stroke="#222" /></svg></TrayItem>
        <TrayItem $ml={9}><svg width="13" height="24" viewBox="0 0 13 24"><rect x="3" y="0" width="7" height="15" rx="3.500" fill="#222" /><path d="M1 11a5.500 5.500 0 0 0 11 0M6.500 17v5M3 23h7" fill="none" stroke="#222" /></svg></TrayItem>
        <TrayItem $ml={14}><svg width="20" height="14" viewBox="0 0 20 14"><rect x="3" y="2" width="15" height="10" fill="#222" /><path d="M0 4h3M0 8h3M18 5h2v4h-2" stroke="#222" /></svg></TrayItem>
        <TrayItem $ml={15}><svg width="18" height="18" viewBox="0 0 18 18"><path d="M2 17C2 9 8 3 17 2M6 17c0-5 4-9 10-10M10 17c0-3 3-5 6-5" fill="none" stroke="#333" /><circle cx="15" cy="16" r="1.500" fill="#222" /></svg></TrayItem>
        <TrayItem $ml={9}><svg width="21" height="18" viewBox="0 0 21 18"><path d="M1 6h3l4-4v14l-4-4H1ZM12 5c2 2 2 6 0 8M16 2c3 4 3 10 0 14" fill="none" stroke="#333" /></svg></TrayItem>
        <TrayItem $ml={9} $size={17}>英</TrayItem>
        <Clock>11:53<br />2021/11/27</Clock>
        <Notify>
          <NotifyBubble width="22" height="24" viewBox="0 0 22 24"><path d="M0 0h20v19H6l-6 5Z" fill="#111" /><path d="M4 5h12M4 9h12M4 13h8" stroke="#eee" /></NotifyBubble>
          <NotifyBadge>3</NotifyBadge>
        </Notify>
      </Tray>
    </Taskbar>

    <Watermark>一叶知秋君莫笑我</Watermark>
    <BiliLogo width="137" height="63" viewBox="0 0 137 63" fill="rgba(222,222,222,.9)">
      <path fillRule="evenodd" d="M0 8 12 6 14 28 34 37Q38 48 34 52L4 63ZM15 37 16 52 26 46Z" />
      <path d="M38 18h5l1 30-5 2ZM47 16h4l1 30-4 2ZM55 3h7l1 44-6 1ZM65 18h5v28h-5Z" />
      <path fillRule="evenodd" transform="translate(72 0)" d="M0 4 12 2 14 26 32 36Q36 46 32 50L4 61ZM15 35 16 50 26 44Z" />
      <path transform="translate(72 0)" d="M36 18h4l1 28-4 2ZM44 16h4v30h-4ZM52 3h6v44h-6ZM59 16h5v30h-5Z" />
    </BiliLogo>
    <TvLogo width="72" height="66" viewBox="0 0 72 66">
      <path d="M20 12 13 2M50 12 57 2" stroke="#dcdcdc" strokeWidth="7" strokeLinecap="round" />
      <rect x="1" y="10" width="68" height="55" rx="12" fill="#dcdcdc" />
      <path d="M13 26h8v10h-8ZM52 28h8v12h-8Z" fill="#c8c8c8" />
      <path d="M24 27 Q22 23 26 25 L47 35 Q50 37 47 39 L26 51 Q22 53 24 49Z" fill="#444" />
    </TvLogo>
  </Page>
);

export default App;
